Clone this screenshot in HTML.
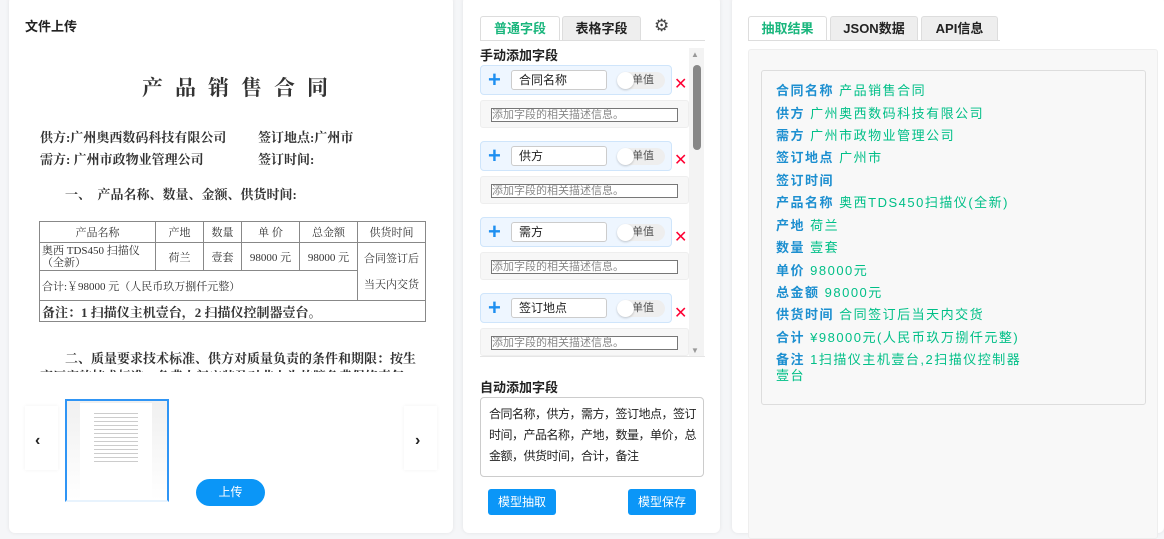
<!DOCTYPE html>
<html><head><meta charset="utf-8"><style>
*{box-sizing:border-box;margin:0;padding:0}
body{width:1164px;height:538px;background:#f5f6f8;font-family:"Liberation Sans","Noto Sans CJK SC",sans-serif;position:relative;overflow:hidden;color:#222}
.card{position:absolute;background:#fff;border-radius:6px;box-shadow:0 0 4px rgba(0,0,0,.08)}
.abs{position:absolute}
.doc{font-family:"Liberation Serif","Noto Serif CJK SC",serif;color:#333;font-weight:bold;font-size:13px}
table.t{border-collapse:collapse;position:absolute;left:39px;top:221px;width:387px;font-size:11px;font-family:"Liberation Serif","Noto Serif CJK SC",serif;color:#333}
table.t td{border:1px solid #888;text-align:center;padding:0 2px}
.tab{position:absolute;height:24px;font-size:13px;font-weight:bold;text-align:center;line-height:24px;border:1px solid #ddd;border-bottom:none;border-radius:3px 3px 0 0;background:#eee}
.tab.on{background:#fff;color:#1ab67d}
.frow{position:absolute;left:480px;width:192px;height:30px;background:#eef6ff;border:1px solid #cfe5fb;border-radius:4px}
.plus{position:absolute;left:7px;top:4px;color:#1e8ff0;font-size:22px;line-height:20px;font-weight:bold}
.inp{position:absolute;left:30px;top:4px;width:96px;height:20px;background:#fff;border:1px solid #ccc;border-radius:3px;font-size:12px;line-height:18px;padding-left:7px}
.sw{position:absolute;left:136px;top:6px;width:48px;height:17px;background:#eee;border-radius:9px;font-size:11px;line-height:17px;padding-left:15px;color:#555}
.sw:before{content:"";position:absolute;left:0;top:0;width:17px;height:17px;border-radius:50%;background:#fff;box-shadow:0 1px 2px rgba(0,0,0,.2)}
.x{position:absolute;left:674px;color:#f03;font-size:16px}
.drow{position:absolute;left:480px;width:209px;height:28px;background:#f7f7f7;border:1px solid #eee;border-radius:3px}
.drow div{position:absolute;left:10px;top:7px;width:187px;height:14px;border:1px solid #777;font-size:11px;line-height:12px;color:#888;background:#fff}
.btn{position:absolute;background:#0b96f7;color:#fff;font-size:12px;text-align:center;border-radius:3px}
.res{position:absolute;left:776px;font-size:13px;letter-spacing:1.5px;line-height:16px}
.res b{color:#1d8fd0}
.res span{color:#00bf87}
</style></head><body>
<div class="card" style="left:9px;top:-4px;width:444px;height:537px"></div>
<div class="abs" style="left:25px;top:16px;font-size:13px;font-weight:bold">文件上传</div>
<div class="abs doc" style="left:142px;top:72px;font-size:21px;letter-spacing:12px">产品销售合同</div>
<div class="abs doc" style="left:40px;top:127px">供方:广州奥西数码科技有限公司</div>
<div class="abs doc" style="left:258px;top:127px">签订地点:广州市</div>
<div class="abs doc" style="left:40px;top:149px">需方: 广州市政物业管理公司</div>
<div class="abs doc" style="left:258px;top:149px">签订时间:</div>
<div class="abs doc" style="left:65px;top:184px">一、&nbsp;&nbsp;产品名称、数量、金额、供货时间:</div>
<table class="t">
<tr style="height:21px"><td style="width:116px">产品名称</td><td style="width:48px">产地</td><td style="width:38px">数量</td><td style="width:58px">单 价</td><td style="width:58px">总金额</td><td>供货时间</td></tr>
<tr style="height:28px"><td style="text-align:left;line-height:12px">奥西 TDS450 扫描仪<br>（全新）</td><td>荷兰</td><td>壹套</td><td>98000 元</td><td>98000 元</td><td rowspan="2" style="line-height:26px">合同签订后<br>当天内交货</td></tr>
<tr style="height:30px"><td colspan="5" style="text-align:left">合计:￥98000 元（人民币玖万捌仟元整）</td></tr>
<tr style="height:21px"><td colspan="6" style="text-align:left;font-size:13px;font-weight:bold">备注：1 扫描仪主机壹台，2 扫描仪控制器壹台。</td></tr>
</table>
<div class="abs doc" style="left:65px;top:348px">二、质量要求技术标准、供方对质量负责的条件和期限：按生</div>
<div class="abs" style="left:40px;top:366px;width:380px;height:6px;overflow:hidden"><div class="doc">产厂家的技术标准，免费上门安装及对非人为故障免费保修壹年</div></div>
<div class="abs" style="left:25px;top:406px;width:33px;height:64px;background:#fff;box-shadow:0 0 4px rgba(0,0,0,.06)"></div>
<div class="abs" style="left:35px;top:432px;font-size:16px;font-weight:bold">‹</div>
<div class="abs" style="left:404px;top:406px;width:33px;height:64px;background:#fff;box-shadow:0 0 4px rgba(0,0,0,.06)"></div>
<div class="abs" style="left:415px;top:432px;font-size:16px;font-weight:bold">›</div>
<div class="abs" style="left:65px;top:399px;width:104px;height:103px;border:2px solid #2f95f5;border-bottom-color:#e8f3fd;background:linear-gradient(#f0f0f0,#fff)">
<div style="position:absolute;left:13px;top:2px;width:72px;height:96px;background:#fff"></div>
<div style="position:absolute;left:27px;top:12px;width:44px;height:50px;background:repeating-linear-gradient(#ccc 0 1px,#fff 1px 4px)"></div>
</div>
<div class="btn" style="left:196px;top:479px;width:69px;height:27px;border-radius:14px;line-height:27px;font-size:12px">上传</div>

<div class="card" style="left:463px;top:-4px;width:257px;height:537px"></div>
<div class="tab on" style="left:480px;top:16px;width:80px">普通字段</div>
<div class="tab" style="left:562px;top:16px;width:79px">表格字段</div>
<div class="abs" style="left:654px;top:16px;font-size:17px;color:#444">⚙</div>
<div class="abs" style="left:480px;top:40px;width:225px;height:1px;background:#ddd"></div>
<div class="abs" style="left:480px;top:49px;font-size:13px;font-weight:bold;line-height:14px">手动添加字段</div>
<div class="abs" style="left:689px;top:48px;width:15px;height:308px;background:#f3f3f3"></div>
<div class="abs" style="left:693px;top:65px;width:8px;height:85px;background:#888;border-radius:4px"></div>
<div class="abs" style="left:691px;top:50px;font-size:8px;color:#999">▲</div>
<div class="abs" style="left:691px;top:346px;font-size:8px;color:#999">▼</div>
<div class="frow" style="top:65px"><span class="plus">+</span><div class="inp">合同名称</div><div class="sw">单值</div></div><span class="x" style="top:74px">✕</span>
<div class="drow" style="top:100px"><div>添加字段的相关描述信息。</div></div>
<div class="frow" style="top:141px"><span class="plus">+</span><div class="inp">供方</div><div class="sw">单值</div></div><span class="x" style="top:150px">✕</span>
<div class="drow" style="top:176px"><div>添加字段的相关描述信息。</div></div>
<div class="frow" style="top:217px"><span class="plus">+</span><div class="inp">需方</div><div class="sw">单值</div></div><span class="x" style="top:227px">✕</span>
<div class="drow" style="top:252px"><div>添加字段的相关描述信息。</div></div>
<div class="frow" style="top:293px"><span class="plus">+</span><div class="inp">签订地点</div><div class="sw">单值</div></div><span class="x" style="top:303px">✕</span>
<div class="drow" style="top:328px"><div>添加字段的相关描述信息。</div></div>
<div class="abs" style="left:480px;top:356px;width:225px;height:1px;background:#e5e5e5"></div>
<div class="abs" style="left:480px;top:381px;font-size:13px;font-weight:bold;line-height:14px">自动添加字段</div>
<div class="abs" style="left:480px;top:397px;width:224px;height:80px;border:1px solid #ccc;border-radius:4px;font-size:12px;line-height:21px;padding:6px 2px 6px 8px;letter-spacing:-0.5px">合同名称，供方，需方，签订地点，签订时间，产品名称，产地，数量，单价，总金额，供货时间，合计，备注</div>
<div class="btn" style="left:488px;top:489px;width:68px;height:26px;line-height:26px">模型抽取</div>
<div class="btn" style="left:628px;top:489px;width:68px;height:26px;line-height:26px">模型保存</div>

<div class="card" style="left:732px;top:-4px;width:432px;height:537px"></div>
<div class="tab on" style="left:748px;top:16px;width:79px">抽取结果</div>
<div class="tab" style="left:830px;top:16px;width:88px">JSON数据</div>
<div class="tab" style="left:921px;top:16px;width:77px">API信息</div>
<div class="abs" style="left:748px;top:40px;width:252px;height:1px;background:#ddd"></div>
<div class="abs" style="left:748px;top:49px;width:410px;height:490px;background:#f8f8f8;border:1px solid #eee;border-radius:3px"></div>
<div class="abs" style="left:761px;top:70px;width:385px;height:335px;border:1px solid #ddd;border-radius:3px;background:#f8f8f8"></div>
<div class="res" style="top:83px"><b>合同名称</b> <span>产品销售合同</span></div>
<div class="res" style="top:106px"><b>供方</b> <span>广州奥西数码科技有限公司</span></div>
<div class="res" style="top:128px"><b>需方</b> <span>广州市政物业管理公司</span></div>
<div class="res" style="top:150px"><b>签订地点</b> <span>广州市</span></div>
<div class="res" style="top:173px"><b>签订时间</b></div>
<div class="res" style="top:195px"><b>产品名称</b> <span>奥西TDS450扫描仪(全新)</span></div>
<div class="res" style="top:218px"><b>产地</b> <span>荷兰</span></div>
<div class="res" style="top:240px"><b>数量</b> <span>壹套</span></div>
<div class="res" style="top:263px"><b>单价</b> <span>98000元</span></div>
<div class="res" style="top:285px"><b>总金额</b> <span>98000元</span></div>
<div class="res" style="top:307px"><b>供货时间</b> <span>合同签订后当天内交货</span></div>
<div class="res" style="top:330px"><b>合计</b> <span>¥98000元(人民币玖万捌仟元整)</span></div>
<div class="res" style="top:352px;width:250px"><b>备注</b> <span>1扫描仪主机壹台,2扫描仪控制器壹台</span></div>
</body></html>
